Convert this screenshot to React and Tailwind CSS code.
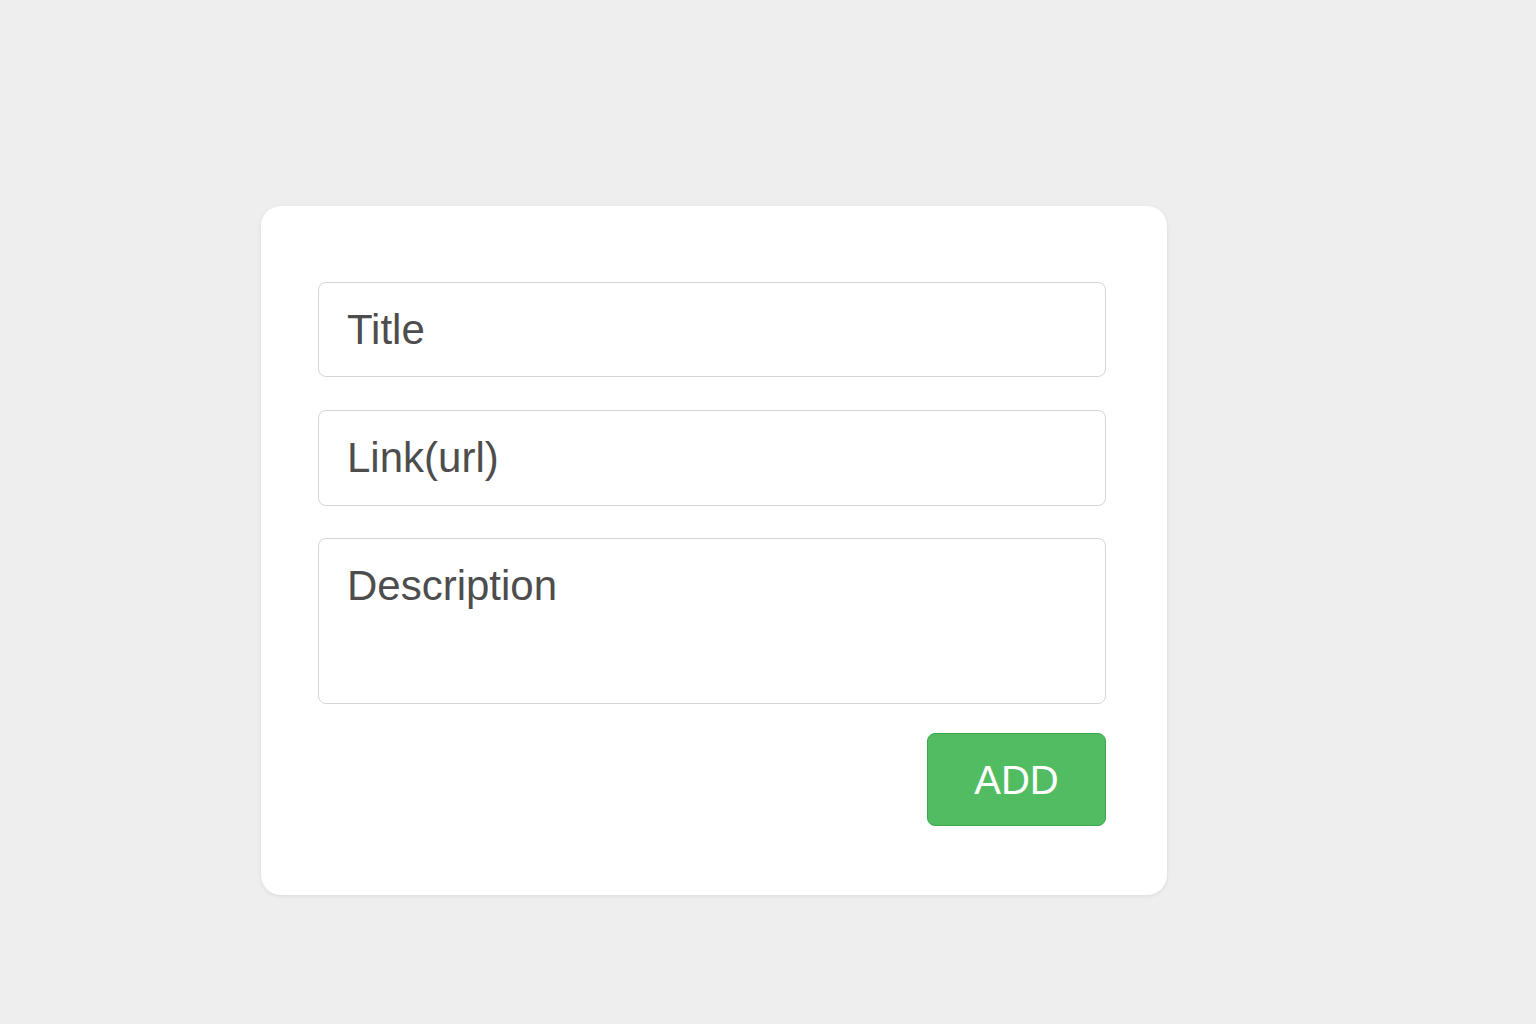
export default function App() {
  return (
    <div className="min-h-screen w-full bg-[#eeeeee] pt-[206px] pl-[261px]" style={{ fontFamily: '"Liberation Sans", Arial, sans-serif' }}>
      <div className="w-[906px] h-[689px] bg-white rounded-[20px] shadow-[0_1px_4px_rgba(0,0,0,0.08)] pl-[57px] pt-[76px] flex flex-col">
        <input
          placeholder="Title"
          className="w-[788px] h-[95px] border border-[#d4d4d4] rounded-[8px] px-[28px] text-[42px] text-[#4d4d4d] placeholder:text-[#4d4d4d] outline-none"
        />
        <input
          placeholder="Link(url)"
          className="mt-[33px] w-[788px] h-[96px] border border-[#d4d4d4] rounded-[8px] px-[28px] text-[42px] text-[#4d4d4d] placeholder:text-[#4d4d4d] outline-none"
        />
        <textarea
          placeholder="Description"
          className="mt-[32px] w-[788px] h-[166px] border border-[#d4d4d4] rounded-[8px] px-[28px] pt-[23px] text-[42px] leading-[48px] text-[#4d4d4d] placeholder:text-[#4d4d4d] outline-none resize-none"
        />
        <div className="mt-[29px] w-[788px] flex justify-end">
          <button className="w-[179px] h-[93px] bg-[#52bc62] border border-[#3aa84a] rounded-[8px] text-white text-[40px] flex items-center justify-center">
            ADD
          </button>
        </div>
      </div>
    </div>
  );
}
